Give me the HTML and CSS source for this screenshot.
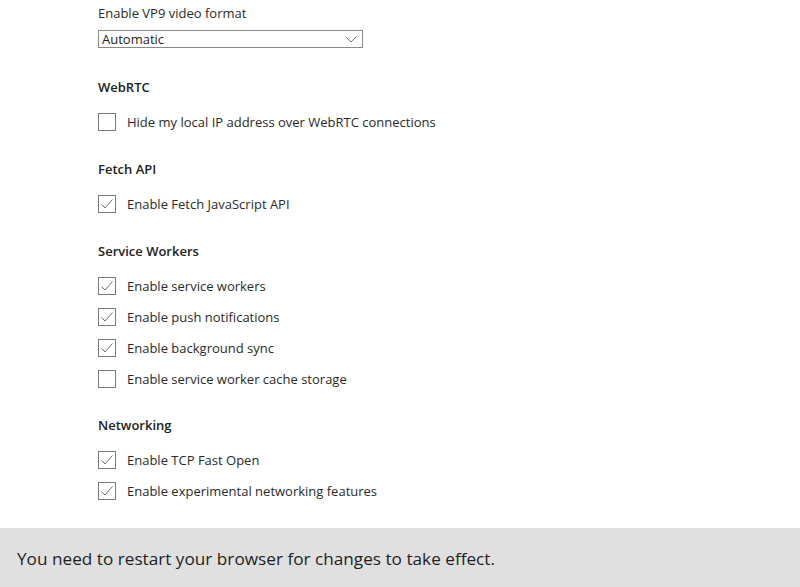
FILE: index.html
```html
<!DOCTYPE html>
<html>
<head>
<meta charset="utf-8">
<link rel="stylesheet" href="styles.css">
</head>
<body>
<div class="page">
  <main class="settings">
    <div class="field-label">Enable VP9 video format</div>
    <div class="select">
      <span class="select-value">Automatic</span>
      <svg class="chevron" width="12" height="7" viewBox="0 0 12 7"><polyline points="0.5,0.5 6,6 11.5,0.5" fill="none" stroke="#777" stroke-width="1"/></svg>
    </div>

    <section class="group">
      <h2 class="group-title">WebRTC</h2>
      <div class="rows">
        <label class="row"><span class="box"></span><span class="text">Hide my local IP address over WebRTC connections</span></label>
      </div>
    </section>

    <section class="group">
      <h2 class="group-title">Fetch API</h2>
      <div class="rows">
        <label class="row"><span class="box"><svg width="18" height="18" viewBox="0 0 18 18"><polyline points="3.5,9.5 7,13 14.5,4.5" fill="none" stroke="#6e6e6e" stroke-width="1"/></svg></span><span class="text">Enable Fetch JavaScript API</span></label>
      </div>
    </section>

    <section class="group">
      <h2 class="group-title">Service Workers</h2>
      <div class="rows">
        <label class="row"><span class="box"><svg width="18" height="18" viewBox="0 0 18 18"><polyline points="3.5,9.5 7,13 14.5,4.5" fill="none" stroke="#6e6e6e" stroke-width="1"/></svg></span><span class="text">Enable service workers</span></label>
        <label class="row"><span class="box"><svg width="18" height="18" viewBox="0 0 18 18"><polyline points="3.5,9.5 7,13 14.5,4.5" fill="none" stroke="#6e6e6e" stroke-width="1"/></svg></span><span class="text">Enable push notifications</span></label>
        <label class="row"><span class="box"><svg width="18" height="18" viewBox="0 0 18 18"><polyline points="3.5,9.5 7,13 14.5,4.5" fill="none" stroke="#6e6e6e" stroke-width="1"/></svg></span><span class="text">Enable background sync</span></label>
        <label class="row"><span class="box"></span><span class="text">Enable service worker cache storage</span></label>
      </div>
    </section>

    <section class="group group-last">
      <h2 class="group-title">Networking</h2>
      <div class="rows">
        <label class="row"><span class="box"><svg width="18" height="18" viewBox="0 0 18 18"><polyline points="3.5,9.5 7,13 14.5,4.5" fill="none" stroke="#6e6e6e" stroke-width="1"/></svg></span><span class="text">Enable TCP Fast Open</span></label>
        <label class="row"><span class="box"><svg width="18" height="18" viewBox="0 0 18 18"><polyline points="3.5,9.5 7,13 14.5,4.5" fill="none" stroke="#6e6e6e" stroke-width="1"/></svg></span><span class="text">Enable experimental networking features</span></label>
      </div>
    </section>
  </main>
  <footer class="notice">You need to restart your browser for changes to take effect.</footer>
</div>
</body>
</html>
```

FILE: styles.css
```css
html, body {
  margin: 0;
  padding: 0;
  background: #ffffff;
}
body {
  font-family: "Open Sans", "Noto Sans", sans-serif;
  color: #2a2a2a;
  font-size: 13px;
}
.page {
  height: 587px;
  display: flex;
  flex-direction: column;
  overflow: hidden;
}
.settings {
  flex: 1;
  padding: 3px 0 0 98px;
}
.field-label {
  line-height: 20px;
  height: 20px;
}
.select {
  margin-top: 7px;
  height: 16px;
  border: 1px solid #8a8a8a;
  display: flex;
  align-items: center;
  justify-content: space-between;
  padding: 0 3px 0 3px;
  box-sizing: content-box;
  width: 257px;
}
.select-value {
  line-height: 16px;
  color: #1e1e1e;
}
.chevron {
  display: block;
  margin-right: 2px;
}
.group {
  margin-top: 28px;
}
.group:first-of-type {
  margin-top: 29px;
}
.group-last {
  margin-top: 27px;
}
.group-title {
  margin: 0;
  font-size: 13px;
  font-weight: 600;
  line-height: 20px;
  height: 20px;
  color: #222;
}
.rows {
  margin-top: 16px;
  display: flex;
  flex-direction: column;
  gap: 13px;
}
.row {
  display: flex;
  align-items: center;
  height: 18px;
  gap: 11px;
}
.box {
  width: 16px;
  height: 16px;
  border: 1px solid #7a7a7a;
  position: relative;
  flex: none;
}
.box svg {
  position: absolute;
  left: -1px;
  top: -1px;
}
.text {
  line-height: 18px;
}
.notice {
  height: 59px;
  background: #e0e0e0;
  padding-left: 17px;
  padding-top: 20px;
  box-sizing: border-box;
  font-size: 17.2px;
  line-height: 22px;
  color: #1f1f1f;
}
```
